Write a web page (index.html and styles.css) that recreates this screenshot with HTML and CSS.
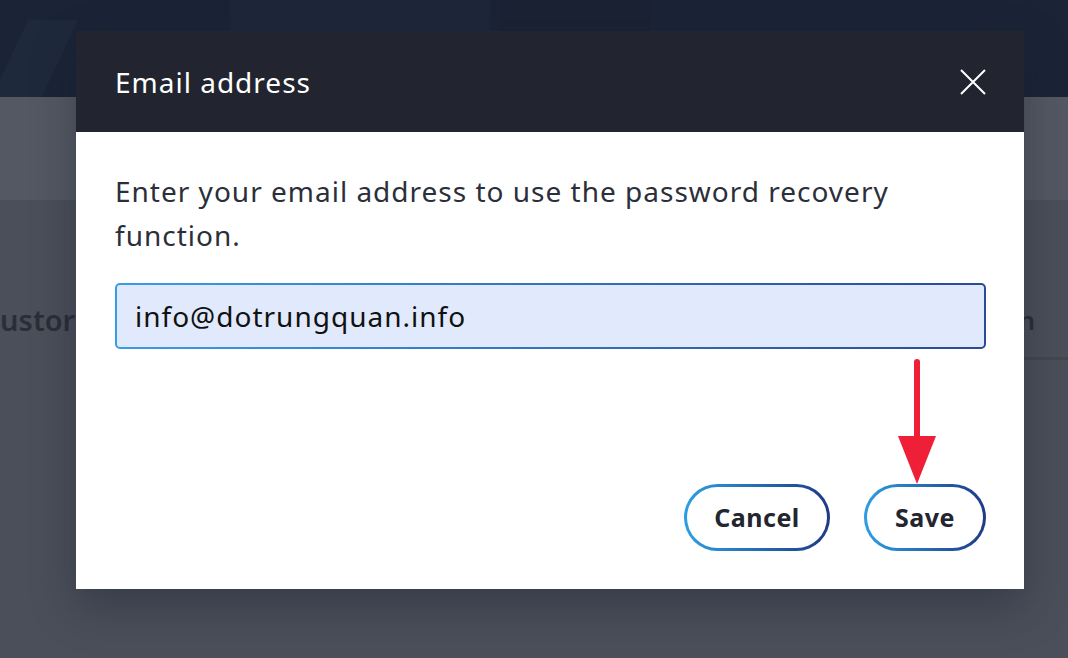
FILE: index.html
```html
<!DOCTYPE html>
<html lang="en">
<head>
<meta charset="utf-8">
<title>Email address</title>
<link rel="stylesheet" href="styles.css">
</head>
<body>
<div class="page">
  <div class="hero">
    <div class="hero-shape s1"></div>
    <div class="hero-shape s2"></div>
    <div class="hero-shape s3"></div>
  </div>
  <div class="subbar"></div>
  <div class="content">
    <div class="tabs">
      <span class="tab left">Bustor</span>
      <span class="tab right">Sign in</span>
    </div>
  </div>
</div>

<div class="modal">
  <div class="modal-head">
    <h1 class="modal-title">Email address</h1>
    <button class="close" aria-label="Close">
      <svg width="26" height="26" viewBox="0 0 26 26"><path d="M1 1 L25 25 M25 1 L1 25" stroke="#fff" stroke-width="2" fill="none"/></svg>
    </button>
  </div>
  <div class="modal-body">
    <p class="desc">Enter your email address to use the password recovery function.</p>
    <div class="input">info@dotrungquan.info</div>
    <div class="actions">
      <button class="btn cancel">Cancel</button>
      <button class="btn save">Save</button>
    </div>
  </div>
</div>

<svg class="arrow" width="44" height="130" viewBox="0 0 44 130">
  <rect x="19" y="0" width="6" height="80" rx="3" fill="#ee1f36"/>
  <polygon points="3,77 41,77 22,125" fill="#ee1f36"/>
</svg>
</body>
</html>
```

FILE: styles.css
```css
* { box-sizing: border-box; }
html, body { margin: 0; padding: 0; }
body {
  width: 1068px;
  height: 658px;
  overflow: hidden;
  background: #4c505a;
  font-family: "Noto Sans", "Open Sans", sans-serif;
  position: relative;
}
.page { display: flex; flex-direction: column; height: 658px; }
.hero {
  height: 97px;
  background: #1b2436;
  position: relative;
  overflow: hidden;
}
.hero-shape { position: absolute; }
.hero-shape.s1 { left: 230px; top: 0; width: 260px; height: 97px; background: #1d2739; }
.hero-shape.s2 { left: 500px; top: 0; width: 150px; height: 97px; background: #1a2233; }
.hero-shape.s3 { left: 10px; top: 20px; width: 50px; height: 77px; background: #1f293c; transform: skewX(-25deg); }
.subbar { height: 103px; background: #545862; }
.content { flex: 1; background: #4b4f59; padding-top: 99px; }
.tabs {
  display: flex;
  justify-content: space-between;
  align-items: flex-start;
  margin-left: -19px;
  margin-right: 0;
}
.tab {
  font-size: 26px;
  font-weight: 600;
  color: #2a2e38;
  line-height: 42px;
}
.tab.left {
  font-size: 29px;
}
.tab.right {
  width: 140px;
  text-align: right;
  padding-right: 33px;
  height: 61px;
  border-bottom: 3px solid #43474f;
}

.modal {
  position: absolute;
  left: 76px;
  top: 31px;
  width: 948px;
  height: 558px;
  background: #fff;
  box-shadow: 0 18px 40px rgba(20, 26, 45, 0.35);
  display: flex;
  flex-direction: column;
}
.modal-head {
  height: 101px;
  background: #22252f;
  display: flex;
  align-items: center;
  justify-content: space-between;
  padding: 0 38px 0 39px;
}
.modal-title {
  margin: 0;
  font-size: 28px;
  font-weight: 400;
  color: #fff;
  letter-spacing: 1px;
}
.close {
  background: none;
  border: 0;
  padding: 0;
  width: 26px;
  height: 26px;
  display: flex;
}
.modal-body {
  flex: 1;
  display: flex;
  flex-direction: column;
  padding: 37px 38px 38px 39px;
}
.desc {
  margin: 0;
  font-size: 28px;
  line-height: 44px;
  letter-spacing: 1px;
  color: #2b2f3a;
}
.input {
  margin-top: 26px;
  height: 66px;
  border: 2px solid transparent;
  border-radius: 5px;
  background: linear-gradient(#e1eafc, #e1eafc) padding-box, linear-gradient(90deg, #3a9de0, #2c4a96) border-box;
  font-size: 28px;
  letter-spacing: 1px;
  color: #111;
  display: flex;
  align-items: center;
  padding-left: 18px;
}
.actions {
  margin-top: auto;
  display: flex;
  justify-content: flex-end;
  gap: 34px;
}
.btn {
  height: 67px;
  border-radius: 34px;
  border: 3px solid transparent;
  background: linear-gradient(#fff, #fff) padding-box, linear-gradient(90deg, #2d9ee2, #1f3a86) border-box;
  font-family: "Noto Sans", "Open Sans", sans-serif;
  font-size: 25px;
  font-weight: 700;
  letter-spacing: 0.5px;
  color: #23262f;
  padding: 0 0 2px;
}
.btn.cancel { width: 146px; }
.btn.save { width: 122px; }
.arrow {
  position: absolute;
  left: 895px;
  top: 359px;
}
```
